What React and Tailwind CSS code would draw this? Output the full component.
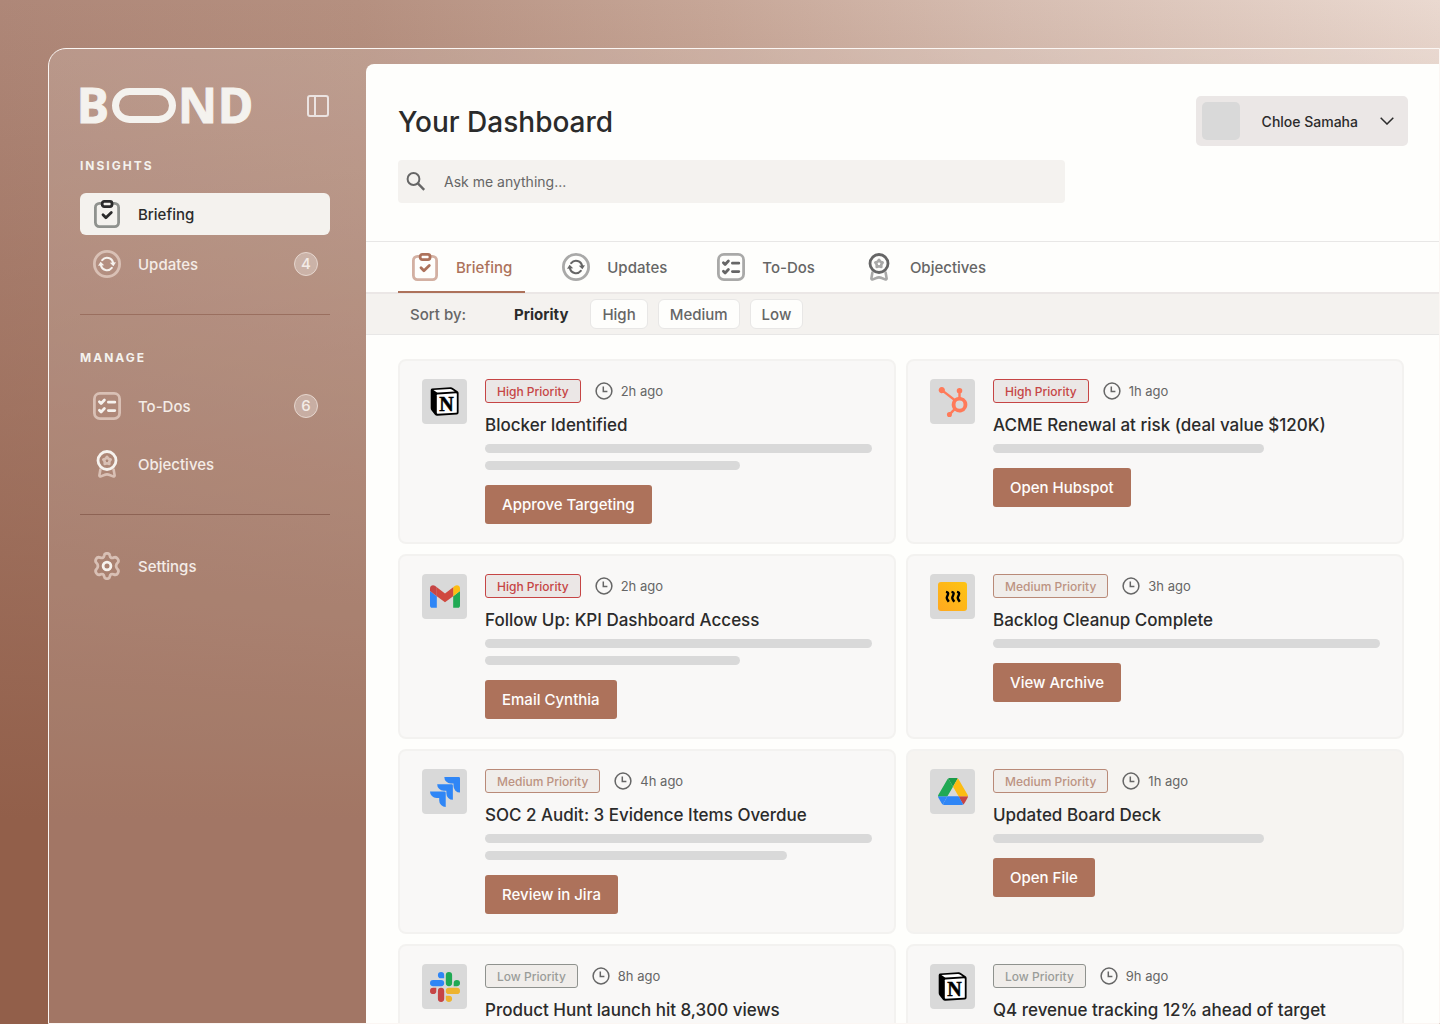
import React from "react";
import { SiHubspot, SiJira } from "react-icons/si";

function BriefingIcon({ frame, mark, inner }) {
  return (
    <svg width="28" height="28" viewBox="0 0 28 28" fill="none" className="shrink-0" aria-hidden="true">
      <rect x="2.4" y="3.4" width="23.2" height="23.2" rx="4" className={frame} strokeWidth="2.8" />
      <rect x="9.200" y="1.400" width="9.800" height="5.200" rx="2" className={mark + " " + inner} strokeWidth="2.8" />
      <path d="M10 14.8l2.900 2.900 5.400-5.200" className={mark} strokeWidth="2.8" strokeLinecap="round" strokeLinejoin="round" />
    </svg>
  );
}

function UpdatesIcon({ frame, mark, dot }) {
  return (
    <svg width="28" height="28" viewBox="0 0 28 28" fill="none" className="shrink-0" aria-hidden="true">
      <circle cx="14" cy="14" r="12.6" className={frame} strokeWidth="2.8" />
      <path
        d="M9.200 10.100A6.200 6.200 0 0 1 20.100 13M18.800 17.900A6.200 6.200 0 0 1 7.900 15"
        className={mark}
        strokeWidth="2.1"
        strokeLinecap="round"
      />
      <path d="M16.800 12.800L23 12.200L20.400 16.200zM11.200 15.200L5 15.800L7.600 11.800z" className={dot} />
    </svg>
  );
}

function TodosIcon({ frame, mark }) {
  return (
    <svg width="28" height="28" viewBox="0 0 28 28" fill="none" className="shrink-0" aria-hidden="true">
      <rect x="1.400" y="1.400" width="25.200" height="25.200" rx="5.500" className={frame} strokeWidth="2.8" />
      <path
        d="M6.400 9.800l1.700 1.700 3.300-3.400M6.400 18.200l1.700 1.700 3.300-3.400M15.400 10.200h6.400M15.400 18.600h6.400"
        className={mark}
        strokeWidth="2.8"
        strokeLinecap="round"
        strokeLinejoin="round"
      />
    </svg>
  );
}

function ObjectivesIcon({ frame, mark }) {
  return (
    <svg width="28" height="28" viewBox="0 0 28 28" fill="none" className="shrink-0" aria-hidden="true">
      <path
        d="M7.400 19.600l-1 5.600c-.2 1 .6 1.600 1.500 1.200l3.400-1.400c1.600-.8 3.800-.8 5.400 0l3.400 1.400c.9.400 1.700-.2 1.500-1.200l-1-5.600"
        className={frame}
        strokeWidth="2.6"
        strokeLinecap="round"
        strokeLinejoin="round"
      />
      <path
        d="M14 6.800l1.400 1.900 2.300.8-1.400 2v2.400l-2.300-.7-2.300.7v-2.400l-1.400-2 2.300-.8z"
        className={frame}
        strokeWidth="2.600"
        strokeLinejoin="round"
      />
      <circle cx="14" cy="10.500" r="9" className={mark} strokeWidth="2.800" />
    </svg>
  );
}

function SettingsIcon({ frame, mark }) {
  return (
    <svg width="28" height="28" viewBox="0 0 28 28" fill="none" className="shrink-0" aria-hidden="true">
      <path
        d="M11.200 3.400Q11.500 1.300 14 1.300T16.800 3.400C17.200 5.700 18.600 6.400 20.600 5.600Q22.900 4.400 24.600 6.800T24.600 10.800C22.600 12.600 22.600 15.400 24.600 17.200Q26.200 18.800 24.800 21.200T20.600 22.400C18.600 21.600 17.200 22.300 16.800 24.600Q16.500 26.700 14 26.700T11.200 24.600C10.800 22.300 9.400 21.600 7.400 22.400Q5 23.500 3.400 21.200T3.400 17.200C5.400 15.400 5.400 12.600 3.400 10.800Q1.800 9.200 3.200 6.800T7.400 5.600C9.400 6.400 10.800 5.700 11.200 3.400Z"
        className={frame}
        strokeWidth="2.8"
        strokeLinejoin="round"
      />
      <circle cx="14" cy="14" r="3.900" className={mark} strokeWidth="2.8" />
    </svg>
  );
}

function ClockIcon() {
  return (
    <svg width="18" height="18" viewBox="0 0 18 18" fill="none" stroke="#666" strokeWidth="1.5" aria-hidden="true">
      <circle cx="9" cy="9" r="7.900" />
      <path d="M8.300 4.600V9.400H12.400" />
    </svg>
  );
}

function NotionLogo() {
  return (
    <svg width="30" height="30" viewBox="0 0 30 30" aria-hidden="true">
      <path d="M2 1.600L20.500.300Q21.800.200 22.800.900L27.600 4.300Q28.600 5 28.600 6.200V25.600Q28.600 27.400 26.800 27.500L7.400 28.700Q5.800 28.800 4.900 27.700L1.400 23.200Q.700 22.300.700 21.100V3.200Q.700 1.700 2 1.600z" fill="#000" />
      <path d="M3.400 3L19.800 1.900Q21 1.800 21.800 2.400L24.800 4.500L8.400 5.500Q7.200 5.600 6.300 4.900z" fill="#fff" />
      <path d="M7.400 7.400L26.100 6.300Q26.800 6.300 26.800 7V24.900Q26.800 25.700 26 25.800L7.700 26.800Q6.800 26.800 6.800 26V8.200Q6.800 7.500 7.400 7.400z" fill="#fff" />
      <text x="16.600" y="23.600" textAnchor="middle" fontFamily="Liberation Serif, serif" fontWeight="700" fontSize="20" fill="#000" stroke="#000" strokeWidth=".5">
        N
      </text>
    </svg>
  );
}

function GmailLogo() {
  return (
    <svg width="30" height="23" viewBox="52 42 88 66" aria-hidden="true">
      <path fill="#2f86f6" d="M58 108h14V74L52 59v43c0 3.320 2.690 6 6 6" />
      <path fill="#20a954" d="M120 108h14c3.320 0 6-2.690 6-6V59l-20 15" />
      <path fill="#fcbc12" d="M120 48v26l20-15v-8c0-7.420-8.470-11.650-14.400-7.200" />
      <path fill="#d0493f" d="M72 74V48l24 18 24-18v26L96 92" />
      <path fill="#c64545" d="M52 51v8l20 15V48l-5.600-4.200c-5.940-4.450-14.400-.220-14.400 7.200" />
    </svg>
  );
}

function DriveLogo() {
  return (
    <svg width="30" height="27" viewBox="0 0 87.300 78" aria-hidden="true">
      <path fill="#2f86f6" d="m6.600 66.850 3.850 6.650c.8 1.400 1.950 2.500 3.300 3.300l13.750-23.800h-27.500c0 1.550.4 3.100 1.200 4.500z" />
      <path fill="#20a954" d="m43.650 25-13.750-23.800c-1.350.8-2.500 1.900-3.300 3.300l-25.400 44a9.060 9.060 0 0 0 -1.200 4.500h27.500z" />
      <path fill="#c64545" d="m73.550 76.800c1.350-.8 2.500-1.900 3.300-3.300l1.600-2.750 7.650-13.250c.8-1.400 1.200-2.950 1.200-4.500h-27.502l5.852 11.500z" />
      <path fill="#1a9a4a" d="m43.650 25 13.750-23.800c-1.350-.8-2.900-1.200-4.500-1.200h-18.500c-1.600 0-3.150.45-4.500 1.200z" />
      <path fill="#2f86f6" d="m59.800 53h-32.300l-13.750 23.800c1.350.8 2.900 1.200 4.500 1.200h50.800c1.600 0 3.150-.45 4.500-1.200z" />
      <path fill="#fcbc12" d="m73.400 26.500-12.700-22c-.8-1.400-1.950-2.500-3.300-3.300l-13.750 23.800 16.150 28h27.450c0-1.550-.4-3.100-1.200-4.500z" />
    </svg>
  );
}

function SlackLogo() {
  return (
    <svg width="30" height="30" viewBox="0 0 24 24" aria-hidden="true">
      <path fill="#c64545" d="M5.042 15.165a2.528 2.528 0 0 1-2.520 2.523A2.528 2.528 0 0 1 0 15.165a2.527 2.527 0 0 1 2.522-2.520h2.520v2.520zM6.313 15.165a2.527 2.527 0 0 1 2.521-2.520 2.527 2.527 0 0 1 2.521 2.520v6.313A2.528 2.528 0 0 1 8.834 24a2.528 2.528 0 0 1-2.521-2.522v-6.313z" />
      <path fill="#2f86f6" d="M8.834 5.042a2.528 2.528 0 0 1-2.521-2.520A2.528 2.528 0 0 1 8.834 0a2.528 2.528 0 0 1 2.521 2.522v2.520H8.834zM8.834 6.313a2.528 2.528 0 0 1 2.521 2.521 2.528 2.528 0 0 1-2.521 2.521H2.522A2.528 2.528 0 0 1 0 8.834a2.528 2.528 0 0 1 2.522-2.521h6.312z" />
      <path fill="#20a954" d="M18.956 8.834a2.528 2.528 0 0 1 2.522-2.521A2.528 2.528 0 0 1 24 8.834a2.528 2.528 0 0 1-2.522 2.521h-2.522V8.834zM17.688 8.834a2.528 2.528 0 0 1-2.523 2.521 2.527 2.527 0 0 1-2.520-2.521V2.522A2.527 2.527 0 0 1 15.165 0a2.528 2.528 0 0 1 2.523 2.522v6.312z" />
      <path fill="#edb32f" d="M15.165 18.956a2.528 2.528 0 0 1 2.523 2.522A2.528 2.528 0 0 1 15.165 24a2.527 2.527 0 0 1-2.520-2.522v-2.522h2.520zM15.165 17.688a2.527 2.527 0 0 1-2.520-2.523 2.526 2.526 0 0 1 2.520-2.520h6.313A2.527 2.527 0 0 1 24 15.165a2.528 2.528 0 0 1-2.522 2.523h-6.313z" />
    </svg>
  );
}

function RowsLogo() {
  return (
    <svg width="29" height="29" viewBox="0 0 29 29" aria-hidden="true">
      <defs>
        <linearGradient id="amber" x1="0" y1="1" x2="1" y2="0">
          <stop offset="0" stopColor="#ffa81f" />
          <stop offset="1" stopColor="#fdc413" />
        </linearGradient>
      </defs>
      <rect width="29" height="29" rx="3" fill="url(#amber)" />
      <path
        d="M8 9.800q2.800.6 2 2.600t-1.200 3 2 4.400M13.500 9.800q2.800.6 2 2.600t-1.200 3 2 4.400M19 9.800q2.800.6 2 2.600t-1.200 3 2 4.400"
        fill="none"
        stroke="#000"
        strokeWidth="2.400"
      />
    </svg>
  );
}

function BondLogo() {
  return (
    <svg width="174" height="36" viewBox="0 0 174 36" className="overflow-visible" role="img" aria-label="BOND">
      <g fill="#f4f2ee" stroke="#f4f2ee" strokeWidth="1" fontFamily="Noto Sans, sans-serif" fontWeight="700" fontSize="48">
        <text x="-3" y="35">B</text>
        <text x="98" y="35">N</text>
        <text x="138" y="35">D</text>
      </g>
      <rect x="35.500" y="3.500" width="57" height="28" rx="14" fill="none" stroke="#f4f2ee" strokeWidth="7" />
    </svg>
  );
}

const light = { frame: "stroke-[#d9c0b5]", mark: "stroke-[#f6f2ee]", dot: "fill-[#f6f2ee]", inner: "fill-none" };
const dark = { frame: "stroke-[#8f928e]", mark: "stroke-[#2b2b2b]", dot: "fill-[#2b2b2b]", inner: "fill-[#f4f2ee]" };
const grey = { frame: "stroke-[#a9a9a8]", mark: "stroke-[#666666]", dot: "fill-[#666666]", inner: "fill-none" };
const clay = { frame: "stroke-[#d3b0a2]", mark: "stroke-[#ad725b]", dot: "fill-[#ad725b]", inner: "fill-[#fefefc]" };

function NavItem({ icon: Icon, label, count, active }) {
  return (
    <a
      href="#"
      aria-current={active ? "page" : undefined}
      className={
        "flex h-[42px] items-center gap-[17px] rounded-md pr-3 pl-[13px] text-[15px] font-medium " +
        (active ? "bg-[#f4f2ee] text-[#2b2b2b]" : "text-[#f4ece7]")
      }
    >
      <Icon {...(active ? dark : light)} />
      <span className="flex-1 pt-0.5">{label}</span>
      {count && (
        <span className="flex size-6 items-center justify-center rounded-full border border-[#e6d6ce] bg-white/30 text-[#f4ece7]">
          {count}
        </span>
      )}
    </a>
  );
}

function Sidebar() {
  return (
    <aside className="flex w-[317px] shrink-0 flex-col pr-9 pl-[31px]">
      <div className="mt-[39px] flex items-center justify-between">
        <BondLogo />
        <button type="button" aria-label="Toggle sidebar" className="mr-px">
          <svg width="22" height="22" viewBox="0 0 22 22" fill="none" stroke="#ebe3e1" strokeWidth="2" aria-hidden="true">
            <rect x="1" y="1" width="20" height="20" rx="2" />
            <path d="M8 1v20" />
          </svg>
        </button>
      </div>
      <h2 className="mt-8 text-xs leading-5 font-bold tracking-[2px] text-[#f4f2ee]">INSIGHTS</h2>
      <nav aria-label="Insights" className="mt-[17px] flex flex-col gap-2">
        <NavItem icon={BriefingIcon} label="Briefing" active />
        <NavItem icon={UpdatesIcon} label="Updates" count="4" />
      </nav>
      <hr className="mt-[29px] border-[#9a6f5f]" />
      <h2 className="mt-[33px] text-xs leading-5 font-bold tracking-[2px] text-[#f4f2ee]">MANAGE</h2>
      <nav aria-label="Manage" className="mt-[17px] flex flex-col gap-4">
        <NavItem icon={TodosIcon} label="To-Dos" count="6" />
        <NavItem icon={ObjectivesIcon} label="Objectives" />
      </nav>
      <hr className="mt-[29px] mb-[30px] border-[#8d6354]" />
      <NavItem icon={SettingsIcon} label="Settings" />
    </aside>
  );
}

const tabs = [
  { icon: BriefingIcon, label: "Briefing", active: true },
  { icon: UpdatesIcon, label: "Updates" },
  { icon: TodosIcon, label: "To-Dos" },
  { icon: ObjectivesIcon, label: "Objectives" },
];

const tagStyles = {
  High: "border-[#c64545] bg-[#ebe7e6] text-[#c64545]",
  Medium: "border-[#b98a78] bg-[#f0edea] text-[#bc9382]",
  Low: "border-[#8f928e] bg-[#f0edea] text-[#9a9c99]",
};

const cards = [
  { logo: <NotionLogo />, priority: "High", time: "2h ago", title: "Blocker Identified", bars: ["w-full", "w-[66%]"], action: "Approve Targeting" },
  { logo: <SiHubspot size={30} color="#ff7a59" aria-hidden="true" />, priority: "High", time: "1h ago", title: "ACME Renewal at risk (deal value $120K)", bars: ["w-[70%]"], action: "Open Hubspot" },
  { logo: <GmailLogo />, priority: "High", time: "2h ago", title: "Follow Up: KPI Dashboard Access", bars: ["w-full", "w-[66%]"], action: "Email Cynthia" },
  { logo: <RowsLogo />, priority: "Medium", time: "3h ago", title: "Backlog Cleanup Complete", bars: ["w-full"], action: "View Archive" },
  { logo: <SiJira size={30} color="#2f86f6" aria-hidden="true" />, priority: "Medium", time: "4h ago", title: "SOC 2 Audit: 3 Evidence Items Overdue", bars: ["w-full", "w-[78%]"], action: "Review in Jira" },
  { logo: <DriveLogo />, priority: "Medium", time: "1h ago", title: "Updated Board Deck", bars: ["w-[70%]"], action: "Open File", tinted: true },
  { logo: <SlackLogo />, priority: "Low", time: "8h ago", title: "Product Hunt launch hit 8,300 views", bars: ["w-full", "w-[66%]"] },
  { logo: <NotionLogo />, priority: "Low", time: "9h ago", title: "Q4 revenue tracking 12% ahead of target", bars: ["w-[70%]"] },
];

function Card({ logo, priority, time, title, bars, action, tinted }) {
  return (
    <article
      className={
        "flex items-start gap-[18px] rounded-lg border-2 border-[#f3f2f0] px-[22px] py-[18px] " +
        (tinted ? "bg-[#f6f4f1]" : "bg-[#f9f8f7]")
      }
    >
      <div className="flex size-[45px] shrink-0 items-center justify-center rounded-sm bg-[#d9d9d9]">{logo}</div>
      <div className="min-w-0 flex-1">
        <div className="flex items-center gap-[14px]">
          <span className={"flex h-6 items-center rounded-[3px] border px-[11px] pt-px text-xs font-medium " + tagStyles[priority]}>
            {priority} Priority
          </span>
          <span className="flex items-center gap-2 text-[13px] text-[#666]">
            <ClockIcon />
            <span className="pt-px">{time}</span>
          </span>
        </div>
        <h3 className="mt-[10px] text-[17px] leading-6 font-medium text-[#2b2b2b]">{title}</h3>
        <div className="mt-[7px] flex flex-col gap-2">
          {bars.map((width, i) => (
            <div key={i} className={"h-[9px] rounded-full bg-[#d9d9d9] " + width} />
          ))}
        </div>
        {action && (
          <button type="button" className="mt-[15px] h-[39px] rounded-[3px] bg-[#ad725b] px-[17px] pt-0.5 text-[15px] font-medium text-[#fefdfc]">
            {action}
          </button>
        )}
      </div>
    </article>
  );
}

function Main() {
  return (
    <main className="mt-[15px] flex min-w-0 flex-1 flex-col overflow-hidden rounded-tl-lg bg-[#fefefc]">
      <header className="pt-8 pr-[31px] pb-[38px] pl-8">
        <div className="flex items-center justify-between">
          <h1 className="pt-px text-[28px] leading-9 font-medium text-[#2b2b2b]">Your Dashboard</h1>
          <button type="button" className="flex h-[50px] items-center rounded-[5px] bg-[#ebe7e6] pr-[14px] pl-1.5 text-sm font-medium text-[#2b2b2b]">
            <span className="size-[38px] rounded-[5px] bg-[#d9d9d9]" />
            <span className="px-[22px] pt-0.5">Chloe Samaha</span>
            <svg width="14" height="8" viewBox="0 0 14 8" fill="none" stroke="#2b2b2b" strokeWidth="1.5" aria-hidden="true">
              <path d="M.7.700L7 7l6.300-6.300" />
            </svg>
          </button>
        </div>
        <label className="mt-[14px] flex h-[43px] w-[66%] items-center gap-[18px] rounded-[4px] bg-[#f4f2ef] px-2">
          <svg width="20" height="20" viewBox="0 0 20 20" fill="none" stroke="#666" strokeWidth="2" className="shrink-0" aria-hidden="true">
            <circle cx="7.500" cy="7" r="5.900" />
            <path d="M11.600 11.200l6.600 6.600" strokeWidth="2.400" />
          </svg>
          <input
            type="text"
            aria-label="Ask me anything"
            placeholder="Ask me anything..."
            className="w-full bg-transparent text-sm text-[#2b2b2b] outline-none placeholder:text-[#666]"
          />
        </label>
      </header>

      <nav aria-label="Sections" className="flex shrink-0 gap-6 border-t border-b-2 border-t-[#e8e7e6] border-b-[#ebe7e6] pl-8">
        {tabs.map(({ icon: Icon, label, active }) => (
          <a
            key={label}
            href="#"
            aria-current={active ? "page" : undefined}
            className={
              "-mb-px flex h-[51px] items-center gap-[17px] border-b-2 px-[13px] text-[15px] font-medium " +
              (active ? "border-[#ad725b] text-[#ad725b]" : "border-transparent text-[#666]")
            }
          >
            <Icon {...(active ? clay : grey)} />
            <span className="pt-[3px]">{label}</span>
          </a>
        ))}
      </nav>

      <div className="flex h-[41px] shrink-0 items-center border-b border-[#e8e7e6] bg-[#f4f2ef] pl-11 text-[15px] font-medium text-[#666]">
        <span className="mr-12 pt-0.5">Sort by:</span>
        <button type="button" className="mr-[22px] pt-0.5 font-bold text-[#2b2b2b]">
          Priority
        </button>
        <div className="flex gap-[10px]">
          {["High", "Medium", "Low"].map((level) => (
            <button key={level} type="button" className="h-[30px] rounded-md border border-[#e8e7e6] bg-[#fefefc] px-[11px] pt-0.5">
              {level}
            </button>
          ))}
        </div>
      </div>

      <section aria-label="Briefing" className="grid grid-cols-2 gap-[10px] pt-6 pr-[35px] pl-8">
        {cards.map((card) => (
          <Card key={card.title} {...card} />
        ))}
      </section>
    </main>
  );
}

export default function App() {
  return (
    <div className="flex h-screen overflow-hidden bg-[linear-gradient(to_bottom,transparent,#925f4a_80%),linear-gradient(to_right,#ae8778,#b59080_25%,#c7a798_50%,#d6bdb1_70%,#ead9d0)] pt-12 pl-12 font-['Inter',sans-serif]">
      <div className="flex min-w-0 flex-1 overflow-hidden rounded-tl-[18px] border border-[#fbf6f3] bg-white/15">
        <Sidebar />
        <Main />
      </div>
    </div>
  );
}
